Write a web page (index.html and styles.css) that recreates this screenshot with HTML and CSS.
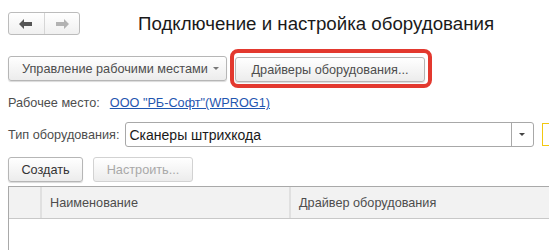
FILE: index.html
```html
<!DOCTYPE html>
<html lang="ru">

<head>
    <meta charset="utf-8">
    <title>Подключение и настройка оборудования</title>
    <link rel="stylesheet" href="styles.css">
</head>

<body>
    <header class="top">
        <div class="nav_group">
            <button class="nav_btn">
                <svg width="14" height="10" viewBox="0 0 14 10"><path d="M0 5 L5 0 L5 3 L13 3 L13 7 L5 7 L5 10 Z" fill="#555"/></svg>
            </button>
            <button class="nav_btn">
                <svg width="14" height="10" viewBox="0 0 14 10"><path d="M14 5 L9 0 L9 3 L1 3 L1 7 L9 7 L9 10 Z" fill="#b3b3b3"/></svg>
            </button>
        </div>
        <h1>Подключение и настройка оборудования</h1>
    </header>

    <div class="row toolbar">
        <button class="btn btn_menu"><span>Управление рабочими местами</span><span class="caret"></span></button>
        <span class="highlight">
            <button class="btn btn_drivers">Драйверы оборудования...</button>
        </span>
    </div>

    <div class="row place">
        <span class="label">Рабочее место:</span>
        <a href="#" class="link">ООО "РБ-Софт"(WPROG1)</a>
    </div>

    <div class="row type">
        <span class="label">Тип оборудования:</span>
        <div class="combo">
            <span class="combo_text">Сканеры штрихкода</span>
            <span class="combo_btn"><span class="caret dark"></span></span>
        </div>
        <span class="yellow_box"></span>
    </div>

    <div class="row actions">
        <button class="btn btn_create">Создать</button>
        <button class="btn btn_setup" disabled>Настроить...</button>
    </div>

    <div class="table">
        <div class="thead">
            <div class="th th_icon"></div>
            <div class="th th_name">Наименование</div>
            <div class="th th_driver">Драйвер оборудования</div>
        </div>
    </div>
</body>

</html>
```

FILE: styles.css
```css
body {
    margin: 0;
    padding: 0 0 0 8px;
    background-color: #fff;
    font-family: Arial, "Liberation Sans", sans-serif;
    font-size: 12.7px;
    color: #4d4d4d;
    overflow: hidden;
    white-space: nowrap;
}

.top {
    display: flex;
    align-items: center;
    margin-top: 12px;
    height: 23px;
}

.nav_group {
    display: flex;
    flex-shrink: 0;
    width: 72px;
    height: 23px;
    border: 1px solid #bcbcbc;
    border-radius: 3px;
    box-sizing: border-box;
    background: linear-gradient(#ffffff, #f0f0f0);
}

.nav_btn {
    flex: 1;
    border: none;
    background: none;
    padding: 0;
    display: flex;
    align-items: center;
    justify-content: center;
}

.nav_btn + .nav_btn {
    border-left: 1px solid #d6d6d6;
}

h1 {
    margin: 0 0 0 58px;
    font-size: 18.7px;
    font-weight: normal;
    color: #1a1a1a;
}

.row {
    display: flex;
    align-items: center;
}

.row > * {
    flex-shrink: 0;
}

.btn {
    height: 25px;
    border: 1px solid #b6b6b6;
    border-radius: 3px;
    background: linear-gradient(#ffffff, #ececec);
    box-shadow: 0 1px 1px rgba(0, 0, 0, 0.15);
    font-family: Arial, "Liberation Sans", sans-serif;
    font-size: 12.7px;
    color: #4d4d4d;
    padding: 0 6px;
    box-sizing: border-box;
    white-space: nowrap;
}

.toolbar {
    margin-top: 14px;
    height: 39px;
}

.btn_menu {
    width: 219px;
    display: flex;
    align-items: center;
    justify-content: space-between;
    padding: 0 7px 0 13px;
}

.caret {
    display: inline-block;
    width: 0;
    height: 0;
    border-left: 3px solid transparent;
    border-right: 3px solid transparent;
    border-top: 3px solid #777;
}

.caret.dark {
    border-top-color: #444;
}

.highlight {
    margin-left: 3px;
    border: 4px solid #e3392f;
    border-radius: 8px;
    padding: 4px 3px 2px 1px;
    display: flex;
}

.btn_drivers {
    width: 190px;
}

.place {
    margin-top: 7px;
    height: 16px;
}

.label {
    color: #4d4d4d;
}

.link {
    margin-left: 10px;
    color: #1f56b0;
    text-decoration: underline;
}

.type {
    margin-top: 11px;
    height: 25px;
}

.combo {
    margin-left: 5px;
    width: 409px;
    height: 25px;
    border: 1px solid #a8a8a8;
    border-radius: 3px;
    box-sizing: border-box;
    display: flex;
    align-items: center;
}

.combo_text {
    flex: 1;
    padding-left: 4px;
    font-size: 14px;
    color: #1a1a1a;
}

.combo_btn {
    width: 21px;
    height: 100%;
    border-left: 1px solid #a8a8a8;
    display: flex;
    align-items: center;
    justify-content: center;
}

.yellow_box {
    margin-left: 8px;
    width: 12px;
    height: 23px;
    border: 1px solid #f2c811;
    border-right: none;
    box-sizing: border-box;
}

.actions {
    margin-top: 10px;
    gap: 10px;
}

.btn_create {
    width: 75px;
    color: #333;
}

.btn_setup {
    width: 100px;
    color: #a8a8a8;
    border-color: #d2d2d2;
    box-shadow: none;
}

.table {
    margin-top: 4px;
    border-top: 1px solid #a9a9a9;
    border-left: 1px solid #a9a9a9;
    height: 70px;
}

.thead {
    display: flex;
    height: 31px;
    background-color: #f2f2f2;
    border-bottom: 1px solid #c8c8c8;
}

.th {
    display: flex;
    align-items: center;
    color: #4d4d4d;
    font-size: 12.7px;
    box-sizing: border-box;
}

.th_icon {
    width: 33px;
    border-right: 2px solid #e0e0e0;
}

.th_name {
    width: 249px;
    padding-left: 8px;
    border-right: 2px solid #e0e0e0;
}

.th_driver {
    flex: 1;
    padding-left: 8px;
}
```
